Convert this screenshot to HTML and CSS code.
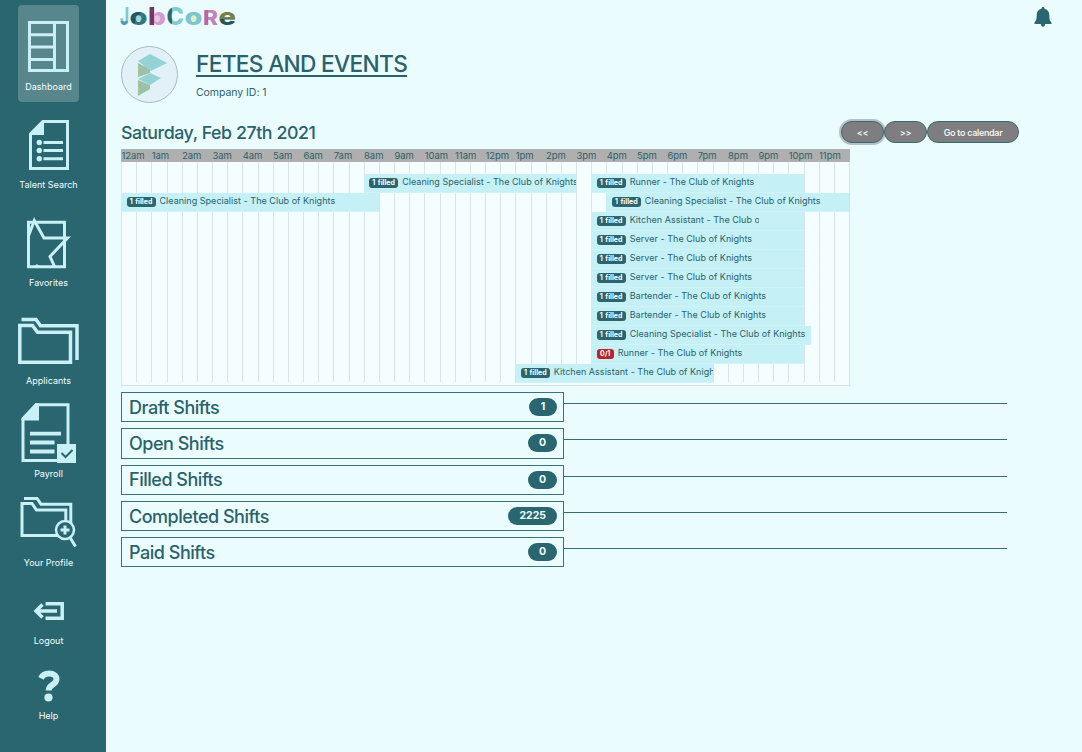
FILE: index.html
```html
<!DOCTYPE html>
<html lang="en">
<head>
<meta charset="utf-8">
<title>JobCore - Dashboard</title>
<link rel="stylesheet" href="styles.css">
</head>
<body>
<div class="app">
  <nav class="sidebar">
    <a class="nav-item tall active"><svg width="61" height="76" viewBox="18 5 61 76"><g class="line"><path d="M29.500 22.500h38v48h-38zM54.500 22v49M29 34.800h25M29 47h25M29 59.500h25"/></g></svg><span>Dashboard</span></a>
    <a class="nav-item tall"><svg width="61" height="76" viewBox="18 103 61 76"><path class="line" d="M43 121.500h24.500v47h-37V134z"/><path class="solid" d="M42 120.500h2V135H29.500v-2z"/><g class="solid"><circle cx="39.300" cy="142.500" r="2.700"/><circle cx="39.300" cy="150.500" r="2.700"/><circle cx="39.300" cy="158.700" r="2.700"/></g><path class="line" d="M43.500 142.500H63M43.500 150.500H63M43.500 158.700H63"/></svg><span>Talent Search</span></a>
    <a class="nav-item tall"><svg width="61" height="76" viewBox="18 201 61 76"><path class="line" d="M28.500 222.300h36v44.400h-36z"/><path class="line" d="M28.500 236l5.800-15.500 9.700 17.500h23.500L50 256.500l5 11M35 267l2-1 2 1"/></svg><span>Favorites</span></a>
    <a class="nav-item tall"><svg width="61" height="76" viewBox="18 299 61 76"><path class="line folder" d="M19.800 325.500h12.700l5 6.700h33v30H19.800zM21.500 319.500H36l4.500 6.200h36.500V360"/></svg><span>Applicants</span></a>
    <a class="nav-item"><svg width="61" height="71" viewBox="18 397 61 71"><path class="line" d="M37 404.700h31v55.800H23V419z"/><path class="solid" d="M35.500 403H39v17.500H21.500V418z"/><path class="line thick" d="M30 433.700h31M30 442.500h24.500M30 451.500h24.500"/><path class="solid" d="M57 444h19v19H57z"/><path class="cut" d="M61.500 453l4 4 7-7"/></svg><span>Payroll</span></a>
    <a class="nav-item"><svg width="61" height="77" viewBox="18 480 61 77"><path class="line" d="M22 503.500H32l4.500 6.500h29.300v25.500H22zM24 498.500h13l4 5.700h29.800V528"/><circle class="disc" cx="65" cy="530" r="9"/><path class="line" d="M60.500 530h9M65 525.500v9M70 537.500l5.500 9"/></svg><span>Your Profile</span></a>
    <a class="nav-item"><svg width="61" height="66" viewBox="18 569 61 66"><path class="line logout" d="M45.500 603.700h16.700v14.600H45.500M57 611H36.500M42.500 604.500L36 611l6.500 6.500"/></svg><span>Logout</span></a>
    <a class="nav-item"><svg width="61" height="63" viewBox="18 647 61 63"><path class="question" d="M41 678.300c1.500-3 4.500-4.700 8.200-4.700 4.300 0 7.300 2.200 7.300 5.600 0 3-2.100 4.300-4.600 6-2.300 1.500-3.200 2.600-3.200 5.300"/><circle class="solid" cx="48.500" cy="697.500" r="4.100"/></svg><span>Help</span></a>
  </nav>
  <main class="content">
    <header class="topbar">
      <svg class="brand" width="118" height="26" viewBox="119 5 118 26" role="img" aria-label="JobCore">
        <defs>
          <linearGradient id="sky" x1="0" y1="0" x2="0" y2="1"><stop offset=".65" stop-color="#7fc8d0"/><stop offset=".65" stop-color="#4a9caa"/></linearGradient>
          <linearGradient id="teal" x1="0" y1="0" x2="1" y2="1"><stop offset=".5" stop-color="#1e5963"/><stop offset=".5" stop-color="#347680"/></linearGradient>
          <linearGradient id="plum"><stop offset=".32" stop-color="#773664"/><stop offset=".32" stop-color="#d49cce"/></linearGradient>
          <linearGradient id="cee"><stop offset=".33" stop-color="#286a76"/><stop offset=".33" stop-color="#83cbd3"/></linearGradient>
          <linearGradient id="ar"><stop offset=".35" stop-color="#b366a9"/><stop offset=".35" stop-color="#c183b9"/></linearGradient>
          <linearGradient id="olive" x1="0" y1="0" x2="0" y2="1"><stop offset=".6" stop-color="#748044"/><stop offset=".6" stop-color="#2b5455"/></linearGradient>
        </defs>
        <path fill="#9ed4df" d="M135 14h7v7h-7z"/><path fill="#dff0c4" d="M190 14h7v7h-7z"/><path fill="#f2c4e7" d="M153 15h7v6h-7z"/>
        <g class="brand-text">
          <text x="120" y="25" textLength="9" lengthAdjust="spacingAndGlyphs" fill="url(#sky)">J</text>
          <text x="129.500" y="25" textLength="18" lengthAdjust="spacingAndGlyphs" fill="url(#teal)">o</text>
          <text x="148" y="25" textLength="18" lengthAdjust="spacingAndGlyphs" fill="url(#plum)">b</text>
          <text x="166.500" y="25" textLength="17.500" lengthAdjust="spacingAndGlyphs" fill="url(#cee)">C</text>
          <text x="184.500" y="25" textLength="18" lengthAdjust="spacingAndGlyphs" fill="#7ac5ce">o</text>
          <text class="small-cap" x="203" y="25" textLength="15" lengthAdjust="spacingAndGlyphs" fill="url(#ar)">R</text>
          <text x="218.500" y="25" textLength="17.500" lengthAdjust="spacingAndGlyphs" fill="url(#olive)">e</text>
        </g>
      </svg>
      <svg class="bell" width="18" height="20" viewBox="0 0 18 20"><path d="M9 0c1 0 1.500.7 1.500 1.700 3 .7 4.800 3 4.800 6.300 0 4.500.7 6 2.200 7.500v1.500H.5v-1.500C2 14 2.700 12.500 2.700 8c0-3.300 1.800-5.600 4.800-6.300C7.500.7 8 0 9 0zM6.800 17h4.400C11 19 10.200 19.700 9 19.700s-2-.7-2.200-2.700z"/></svg>
    </header>
    <section class="company">
      <div class="avatar"><svg width="56" height="56" viewBox="0 0 56 56"><path fill="#9cc1a5" d="M16 16l12 6v4l-12 4zM16 33l12 5v4l-12 7z"/><path fill="#93d2d5" d="M16 14l12-7 17 9-16 8zM16 32l12-6 11 5-11 7z"/></svg></div>
      <div><h1>FETES AND EVENTS</h1><p>Company ID: 1</p></div>
    </section>
    <section class="calendar-head">
      <h2>Saturday, Feb 27th 2021</h2>
      <div class="buttons"><button class="focused">&lt;&lt;</button><button>&gt;&gt;</button><button class="wide">Go to calendar</button></div>
    </section>
    <section class="timeline">
      <div class="hours"><span>12am</span><span>1am</span><span>2am</span><span>3am</span><span>4am</span><span>5am</span><span>6am</span><span>7am</span><span>8am</span><span>9am</span><span>10am</span><span>11am</span><span>12pm</span><span>1pm</span><span>2pm</span><span>3pm</span><span>4pm</span><span>5pm</span><span>6pm</span><span>7pm</span><span>8pm</span><span>9pm</span><span>10pm</span><span>11pm</span></div>
      <div class="rows">
        <div class="row"><div class="shift" style="grid-column:33/61"><b>1 filled</b><span>Cleaning Specialist - The Club of Knights</span></div><div class="shift" style="grid-column:63/91"><b>1 filled</b><span>Runner - The Club of Knights</span></div></div>
        <div class="row"><div class="shift" style="grid-column:1/35"><b>1 filled</b><span>Cleaning Specialist - The Club of Knights</span></div><div class="shift" style="grid-column:65/97"><b>1 filled</b><span>Cleaning Specialist - The Club of Knights</span></div></div>
        <div class="row"><div class="shift" style="grid-column:63/91"><b>1 filled</b><span class="short">Kitchen Assistant - The Club of Knights</span></div></div>
        <div class="row"><div class="shift" style="grid-column:63/91"><b>1 filled</b><span>Server - The Club of Knights</span></div></div>
        <div class="row"><div class="shift" style="grid-column:63/91"><b>1 filled</b><span>Server - The Club of Knights</span></div></div>
        <div class="row"><div class="shift" style="grid-column:63/91"><b>1 filled</b><span>Server - The Club of Knights</span></div></div>
        <div class="row"><div class="shift" style="grid-column:63/91"><b>1 filled</b><span>Bartender - The Club of Knights</span></div></div>
        <div class="row"><div class="shift" style="grid-column:63/91"><b>1 filled</b><span>Bartender - The Club of Knights</span></div></div>
        <div class="row"><div class="shift" style="grid-column:63/92"><b>1 filled</b><span class="clipped">Cleaning Specialist - The Club of Knights</span></div></div>
        <div class="row"><div class="shift" style="grid-column:63/91"><b class="open">0/1</b><span>Runner - The Club of Knights</span></div></div>
        <div class="row"><div class="shift" style="grid-column:53/79"><b>1 filled</b><span>Kitchen Assistant - The Club of Knights</span></div></div>
      </div>
    </section>
    <section class="summary">
      <div class="group"><div class="card"><h3>Draft Shifts</h3><b>1</b></div><hr></div>
      <div class="group"><div class="card"><h3>Open Shifts</h3><b>0</b></div><hr></div>
      <div class="group"><div class="card"><h3>Filled Shifts</h3><b>0</b></div><hr></div>
      <div class="group"><div class="card"><h3>Completed Shifts</h3><b>2225</b></div><hr></div>
      <div class="group"><div class="card"><h3>Paid Shifts</h3><b>0</b></div><hr></div>
    </section>
  </main>
</div>
</body>
</html>
```
FILE: styles.css
```css
* { box-sizing: border-box; }
body { margin: 0; background: #ebfcff; color: #2a626b; font-family: Inter, "Liberation Sans", sans-serif; }
h1, h2, h3, p { margin: 0; font-weight: 500; white-space: nowrap; }
.app { display: flex; height: 752px; overflow: hidden; }

.sidebar { flex: none; width: 105.500px; padding: 5px 0 0 18px; background: #29666f; }
.nav-item { display: block; width: 61px; color: #f3ffff; font-size: 9px; line-height: 12px; text-align: center; }
.nav-item.tall { height: 98px; }
.nav-item.active { height: 97px; margin-bottom: 1px; background: #57868c; border-radius: 4px; }
.nav-item svg { display: block; }
.nav-item span { display: block; white-space: nowrap; }
.line { fill: none; stroke: #c9f0f7; stroke-width: 3; }
.folder { stroke-width: 3.500; }
.thick { stroke-width: 3.800; }
.logout { stroke-width: 3.500; }
.solid { fill: #c9f0f7; }
.cut { fill: none; stroke: #29666f; stroke-width: 2; }
.disc { fill: #29666f; stroke: #c9f0f7; stroke-width: 2.500; }
.question { fill: none; stroke: #c9f0f7; stroke-width: 6; }

.content { flex: 1; padding: 5px 30px 0 15.500px; }
.topbar { display: flex; justify-content: space-between; height: 40px; }
.brand { display: block; margin-left: -2px; overflow: visible; }
.brand-text { font-weight: 800; font-size: 24px; }
.small-cap { font-size: 20px; }
.bell { margin: 2px 0 0; fill: #29666f; }

.company { display: flex; gap: 18px; height: 75px; }
.avatar { width: 57px; height: 57px; margin-top: 1px; border: 1px solid #a9bbc0; border-radius: 50%; background: #e2f0f8; overflow: hidden; }
.company h1 { margin-top: 4px; font-size: 22.700px; line-height: 30px; letter-spacing: -.68px; text-decoration: underline; text-decoration-thickness: 2px; text-underline-offset: 3px; }
.company p { margin-top: 6px; font-size: 10.500px; line-height: 16px; font-weight: 400; letter-spacing: -.05px; }

.calendar-head { display: flex; justify-content: space-between; height: 29px; }
.calendar-head h2 { font-size: 17.800px; line-height: 25px; letter-spacing: -.44px; }
.buttons { display: flex; margin-right: 33px; }
.buttons button { width: 43px; height: 22px; margin-top: 1px; padding: 0; border: 1px solid #386970; border-radius: 11px; background: #7e7e80; color: #fff; font: 500 9px Inter, sans-serif; letter-spacing: -.3px; }
.buttons .wide { width: 92px; }
.buttons .focused { box-shadow: 0 0 0 2px #b4c0c6; }

.timeline { width: 729px; height: 237px; border: 1px solid #d2e2e6; border-top: 0; background: #f4fdff; }
.hours { display: grid; grid-template-columns: repeat(24, minmax(0, 1fr)); height: 13px; margin: 0 -1px; padding-right: 1px; background: #afafaf; font-size: 9.500px; line-height: 13px; }
.hours span { white-space: nowrap; padding-left: .4px; letter-spacing: -.05px; }
.rows { height: 220px; margin: 0 0 0 -1px; padding-top: 12px; background: repeating-linear-gradient(90deg, #dbe5e8 0 1px, transparent 1px 15.167px); }
.row { display: grid; grid-template-columns: repeat(96, minmax(0, 1fr)); grid-template-rows: 19px; height: 19px; }
.shift { display: flex; align-items: center; gap: 4px; padding: 0 0 2px 5.500px; overflow: hidden; background: #c5f1f6; border-bottom: 1px solid #cff4f8; white-space: nowrap; font-size: 9px; letter-spacing: .03px; }
.shift b { flex: none; width: 29px; height: 10px; margin-top: 2px; border-radius: 3px; background: #2b666f; color: #fff; font-size: 7px; line-height: 10px; letter-spacing: 0; word-spacing: .8px; text-align: center; }
.shift .open { width: 17px; background: #b92329; }
.shift span { overflow: hidden; line-height: 14px; }
.shift .short { width: 129px; }
.shift .clipped { width: 175px; }

.summary { padding-top: 6px; }
.group { display: flex; height: 36.300px; }
.card { display: flex; justify-content: space-between; align-items: center; width: 443px; height: 30.300px; padding: 0 6px 0 7px; border: 1px solid #3b727a; }
.card h3 { font-size: 18px; letter-spacing: -.48px; }
.card b { min-width: 28px; height: 18px; padding: 0 11px; border-radius: 9px; background: #29666f; color: #f3ffff; font-size: 10.500px; line-height: 18px; text-align: center; }
.group hr { width: 443px; height: 1px; margin: 11px 0 0; border: 0; background: #386c75; }
```
